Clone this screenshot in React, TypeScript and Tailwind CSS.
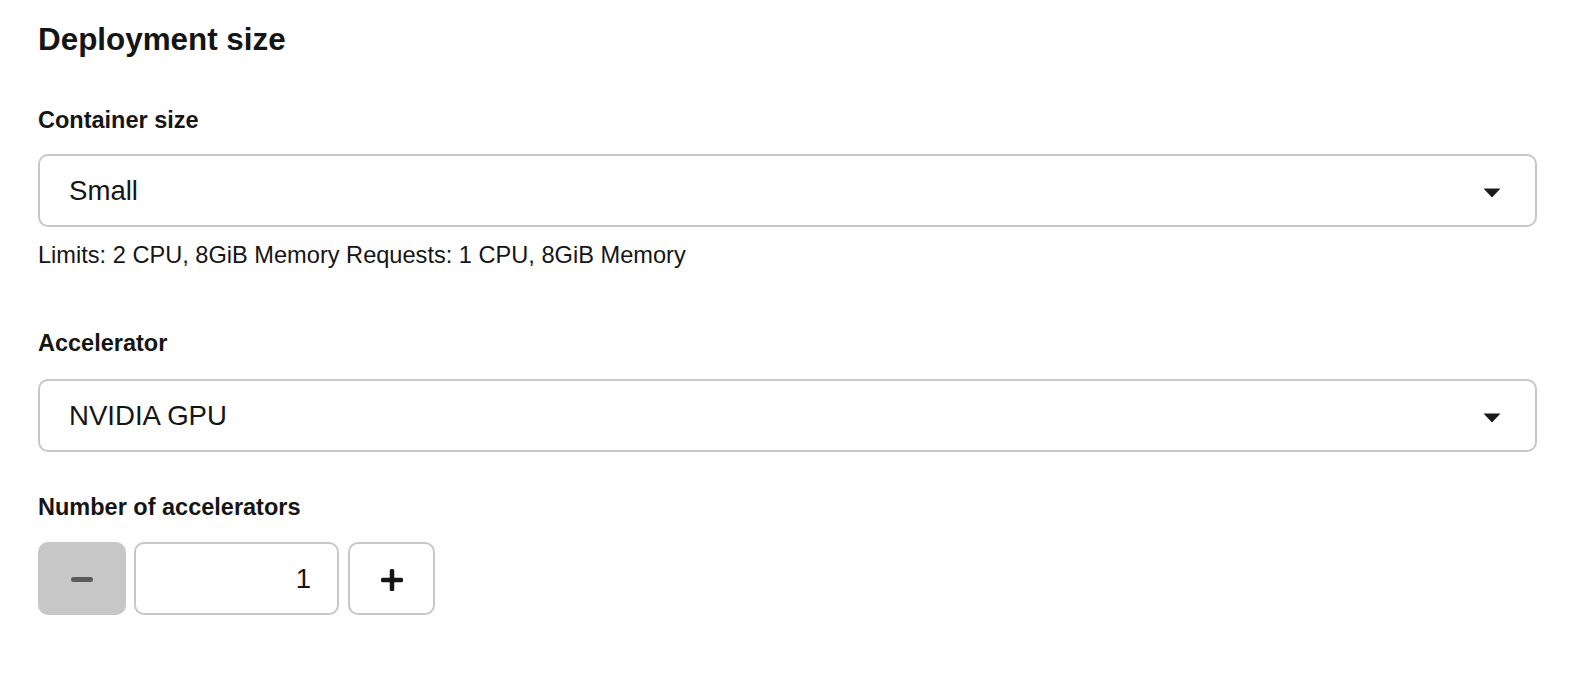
const Caret = () => (
  <svg width="18" height="10" viewBox="0 0 18 10" className="mt-1 shrink-0">
    <path d="M0.5 0.5h17L9 9.5z" fill="#1b1b1b" />
  </svg>
);

const SelectBox = ({ value }: { value: string }) => (
  <div className="flex h-[73px] w-[1499px] items-center justify-between rounded-[10px] border-2 border-[#c7c7c7] bg-white pl-[29px] pr-[34px]">
    <span className="text-[27.6px] leading-[32px] text-[#151515]">{value}</span>
    <Caret />
  </div>
);

const FieldLabel = ({ children, className }: { children: string; className: string }) => (
  <label className={`block text-[23.5px] font-bold leading-[24px] ${className}`}>{children}</label>
);

const App = () => {
  return (
    <div className="min-h-screen bg-white pl-[38px] pt-[22px] font-['Liberation_Sans',Arial,sans-serif] text-[#151515]">
      <h2 className="text-[31.4px] font-bold leading-[36px]">Deployment size</h2>

      {/* container size */}
      <FieldLabel className="mt-[50px]">Container size</FieldLabel>
      <div className="mt-[22px]">
        <SelectBox value="Small" />
      </div>
      <p className="mt-[14px] text-[23.6px] leading-[28px]">
        Limits: 2 CPU, 8GiB Memory Requests: 1 CPU, 8GiB Memory
      </p>

      {/* accelerator */}
      <FieldLabel className="mt-[62px]">Accelerator</FieldLabel>
      <div className="mt-[24px]">
        <SelectBox value="NVIDIA GPU" />
      </div>

      <FieldLabel className="mt-[43px]">Number of accelerators</FieldLabel>
      <div className="mt-[23px] flex items-center">
        <button className="flex h-[73px] w-[88px] items-center justify-center rounded-[10px] bg-[#c7c7c7]">
          <svg width="22" height="5" viewBox="0 0 22 5" className="mt-[2px]">
            <rect width="22" height="5" rx="2.5" fill="#5b5b5b" />
          </svg>
        </button>
        <div className="ml-[8px] flex h-[73px] w-[205px] items-center justify-end rounded-[10px] border-2 border-[#c7c7c7] pr-[26px] text-[27.6px] leading-[32px]">
          1
        </div>
        <button className="ml-[9px] flex h-[73px] w-[87px] items-center justify-center rounded-[10px] border-2 border-[#c7c7c7] bg-white">
          <svg width="22" height="22" viewBox="0 0 22 22" className="mt-[2px]">
            <rect x="8.75" y="0" width="4.5" height="22" rx="1.5" fill="#151515" />
            <rect x="0" y="8.75" width="22" height="4.5" rx="1.5" fill="#151515" />
          </svg>
        </button>
      </div>
    </div>
  );
};

export default App;
